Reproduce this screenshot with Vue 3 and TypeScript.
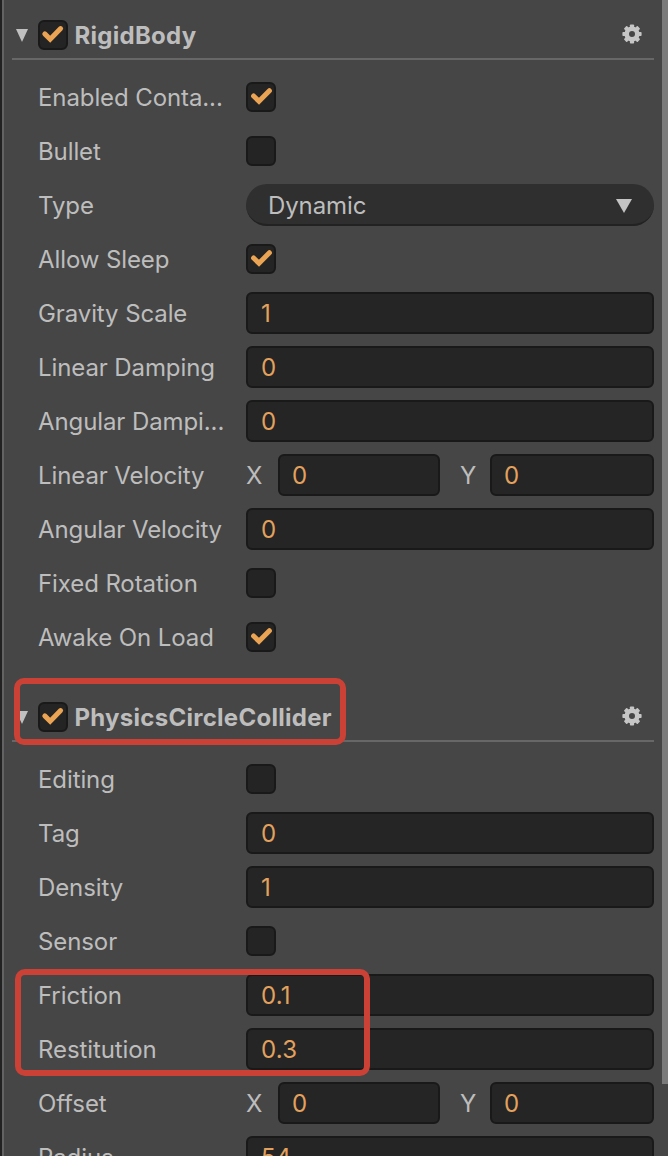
<script setup lang="ts">
interface Row {
  label: string
  kind: 'check' | 'select' | 'number' | 'vec2'
  checked?: boolean
  value?: string
  x?: string
  y?: string
}
interface Section {
  title: string
  rows: Row[]
}

const sections: Section[] = [
  {
    title: 'RigidBody',
    rows: [
      { label: 'Enabled Conta...', kind: 'check', checked: true },
      { label: 'Bullet', kind: 'check' },
      { label: 'Type', kind: 'select', value: 'Dynamic' },
      { label: 'Allow Sleep', kind: 'check', checked: true },
      { label: 'Gravity Scale', kind: 'number', value: '1' },
      { label: 'Linear Damping', kind: 'number', value: '0' },
      { label: 'Angular Dampi...', kind: 'number', value: '0' },
      { label: 'Linear Velocity', kind: 'vec2', x: '0', y: '0' },
      { label: 'Angular Velocity', kind: 'number', value: '0' },
      { label: 'Fixed Rotation', kind: 'check' },
      { label: 'Awake On Load', kind: 'check', checked: true },
    ],
  },
  {
    title: 'PhysicsCircleCollider',
    rows: [
      { label: 'Editing', kind: 'check' },
      { label: 'Tag', kind: 'number', value: '0' },
      { label: 'Density', kind: 'number', value: '1' },
      { label: 'Sensor', kind: 'check' },
      { label: 'Friction', kind: 'number', value: '0.1' },
      { label: 'Restitution', kind: 'number', value: '0.3' },
      { label: 'Offset', kind: 'vec2', x: '0', y: '0' },
      { label: 'Radius', kind: 'number', value: '54' },
    ],
  },
]
const teeth = [0, 45, 90, 135, 180, 225, 270, 315]
</script>

<template>
  <main class="inspector">
    <section v-for="s in sections" :key="s.title" class="section">
      <header class="head">
        <svg class="fold" width="12" height="13" viewBox="0 0 12 13"><path d="M0 0H12L6 13Z" /></svg>
        <span class="check">
          <svg width="30" height="30" viewBox="0 0 30 30"><path d="M6.8 13.9L12.2 19.2L22.6 8.6" /></svg>
        </span>
        <h2>{{ s.title }}</h2>
        <svg class="gear" width="20" height="20" viewBox="-10 -10 20 20">
          <rect v-for="a in teeth" :key="a" x="-2.1" y="-9.6" width="4.2" height="5" rx="0.8" :transform="`rotate(${a})`" />
          <circle r="5.3" />
        </svg>
      </header>
      <div class="rows">
        <div v-for="r in s.rows" :key="r.label" class="row">
          <span class="label">{{ r.label }}</span>
          <span v-if="r.kind === 'check'" class="check">
            <svg v-if="r.checked" width="30" height="30" viewBox="0 0 30 30"><path d="M7.6 14L13 19.3L23.4 8.7" /></svg>
          </span>
          <div v-else-if="r.kind === 'select'" class="select">
            <span>{{ r.value }}</span>
            <svg width="16" height="14" viewBox="0 0 16 14"><path d="M0 0H16L8 14Z" /></svg>
          </div>
          <div v-else-if="r.kind === 'number'" class="field">{{ r.value }}</div>
          <div v-else class="vec">
            <span class="axis">X</span>
            <div class="field first">{{ r.x }}</div>
            <span class="axis second">Y</span>
            <div class="field">{{ r.y }}</div>
          </div>
        </div>
      </div>
    </section>
    <div class="scrollbar"></div>
    <div class="mark mark-title"></div>
    <div class="mark mark-values"></div>
  </main>
</template>

<style>
body {
  overflow: hidden;
  background: #464646;
}
</style>

<style scoped>
.inspector {
  position: relative;
  box-sizing: border-box;
  height: 1156px;
  overflow: hidden;
  padding: 0 14px 0 8px;
  border-left: 2px solid #222;
  background: #464646;
  box-shadow: inset 2px 0 #636363;
  color: #bdbdbd;
  font-family: Inter, sans-serif;
  font-size: 24px;
  line-height: 30px;
  letter-spacing: -0.1px;
}
.section + .section {
  margin-top: 18px;
}
.head {
  display: flex;
  align-items: center;
  box-sizing: border-box;
  height: 60px;
  margin-left: 2px;
  padding: 12px 12.5px 0 4px;
  border-bottom: 2px solid #676767;
}
.fold {
  margin-right: 10px;
  fill: #c0c0c0;
}
h2 {
  flex: 1;
  margin: 0 0 0 6.5px;
  padding-top: 2px;
  font-size: 24px;
  font-weight: 700;
  letter-spacing: 0.27px;
}
.gear {
  margin-top: -2px;
}
.gear circle {
  fill: none;
  stroke: #c6c6c6;
  stroke-width: 4.6;
}
.gear rect {
  fill: #c6c6c6;
}
.check {
  display: block;
  flex: none;
  box-sizing: border-box;
  width: 30px;
  height: 30px;
  border: 2px solid #191919;
  border-radius: 6px;
  background: #242424;
}
.check svg {
  display: block;
  margin: -2px;
}
.check path {
  fill: none;
  stroke: #eba453;
  stroke-width: 5;
  stroke-linecap: round;
}
.rows {
  padding: 10px 0 0 28px;
}
.row {
  display: flex;
  align-items: center;
  height: 54px;
}
.label {
  flex: none;
  width: 208px;
  padding-top: 2px;
  white-space: nowrap;
}
.field {
  flex: 1;
  box-sizing: border-box;
  height: 42px;
  padding: 5px 13px 3px;
  border: 2px solid #191919;
  border-radius: 6px;
  background: #252525;
  color: #e3a15e;
  letter-spacing: 0.2px;
}
.select {
  display: flex;
  flex: 1;
  align-items: center;
  justify-content: space-between;
  box-sizing: border-box;
  height: 42px;
  padding: 4px 22px 0;
  border-bottom: 2px solid #222;
  border-radius: 21px;
  background: #2f2f2f;
}
.select svg {
  fill: #c4c4c4;
}
.vec {
  display: flex;
  flex: 1;
  align-items: center;
}
.vec .field {
  padding-left: 12px;
}
.axis {
  flex: none;
  width: 32px;
  padding-top: 2px;
}
.axis.second {
  width: 30px;
}
.vec .first {
  flex: none;
  width: 162px;
  margin-right: 20px;
}
.scrollbar {
  position: absolute;
  top: 0;
  right: 0;
  width: 6px;
  height: 1084px;
  background: #7b7b7b;
}
.mark {
  position: absolute;
  box-sizing: border-box;
  border: 6px solid #cc4135;
  border-radius: 10px;
}
.mark-title {
  top: 678px;
  left: 12px;
  width: 332px;
  height: 67px;
}
.mark-values {
  top: 969px;
  left: 13px;
  width: 355px;
  height: 107px;
}
</style>
